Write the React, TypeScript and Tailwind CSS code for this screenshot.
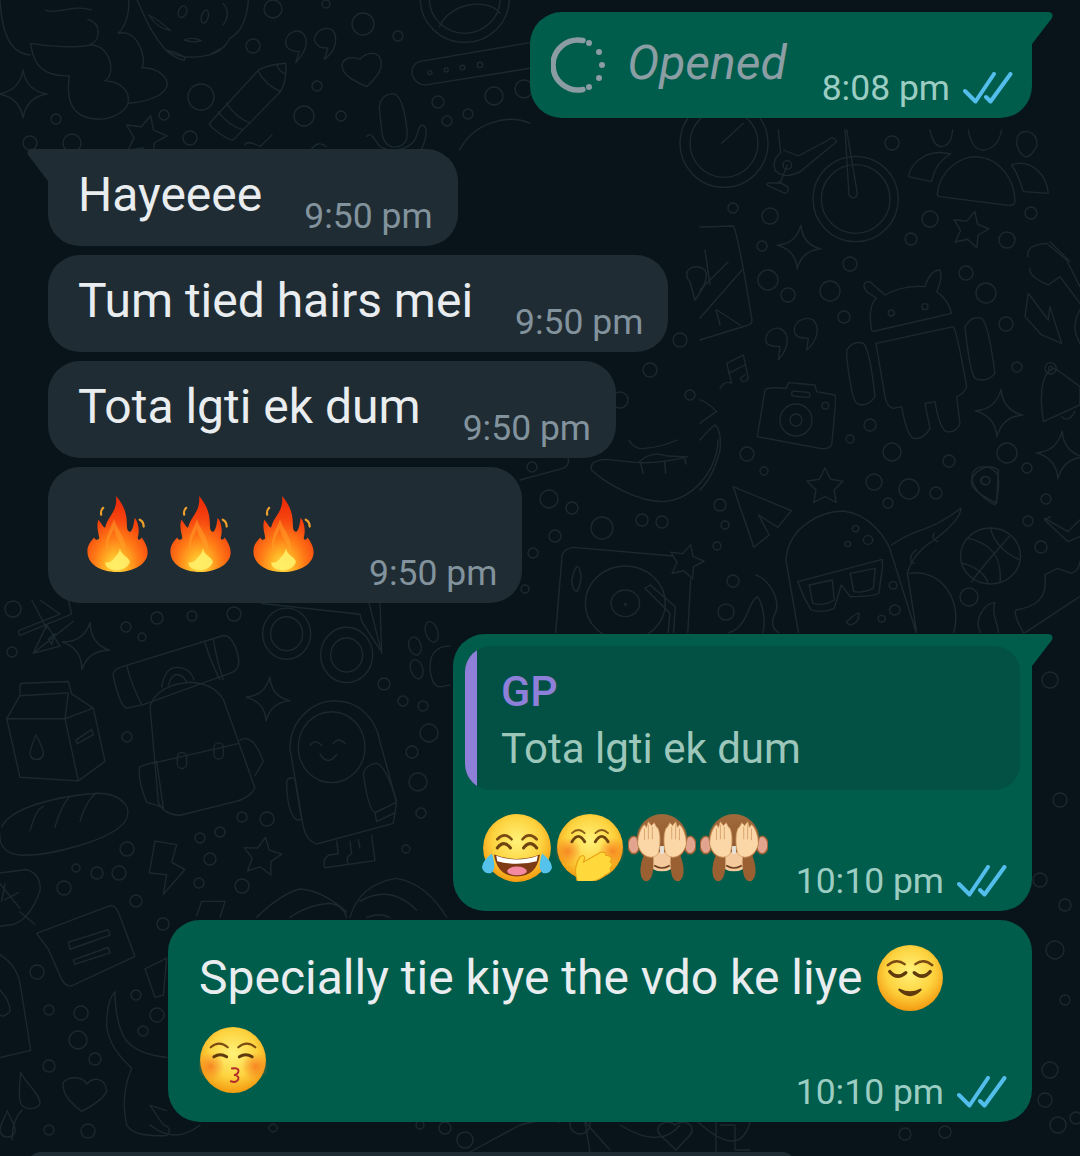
import type { ReactNode } from "react";

const starPoints = (cx: number, cy: number, r: number, rot: number) => {
  const pts: string[] = [];
  for (let i = 0; i < 10; i++) {
    const rad = i % 2 === 0 ? r : r * 0.5;
    const a = ((rot + i * 36 - 90) * Math.PI) / 180;
    pts.push(`${(cx + rad * Math.cos(a)).toFixed(1)},${(cy + rad * Math.sin(a)).toFixed(1)}`);
  }
  return pts.join(" ");
};

const sparkle = (cx: number, cy: number, r: number, rot: number) => {
  const a = (rot * Math.PI) / 180;
  const p = (x: number, y: number) =>
    `${(cx + x * Math.cos(a) - y * Math.sin(a)).toFixed(1)} ${(cy + x * Math.sin(a) + y * Math.cos(a)).toFixed(1)}`;
  const k = r * 0.14;
  return `M${p(0, -r)} Q${p(k, -k)} ${p(r, 0)} Q${p(k, k)} ${p(0, r)} Q${p(-k, k)} ${p(-r, 0)} Q${p(-k, -k)} ${p(0, -r)}Z`;
};

// page-space dots of the doodle wallpaper: x, y, r
const dots: number[][] = [
  [273, 9, 9], [326, 4, 4], [363, 24, 11], [398, 36, 5], [253, 46, 7], [317, 86, 5], [201, 97, 13], [304, 116, 10], [341, 116, 5], [438, 102, 6], [447, 121, 5], [468, 114, 5], [494, 96, 9], [524, 89, 9], [56, 119, 5], [164, 115, 5], [190, 138, 7], [30, 143, 7], [72, 143, 9],
  [733, 208, 5], [770, 216, 8], [762, 246, 5], [768, 280, 10], [788, 295, 7], [830, 291, 10], [850, 264, 7], [844, 317, 6], [870, 425, 6], [850, 439, 4], [892, 143, 7], [930, 219, 8], [911, 239, 6], [1007, 240, 8], [1031, 213, 6], [966, 273, 7], [986, 293, 10], [1006, 324, 7], [1017, 367, 5],
  [892, 452, 9], [874, 482, 8], [909, 489, 10], [936, 493, 6], [888, 503, 5], [1007, 453, 10], [949, 461, 6], [1027, 468, 5], [1046, 499, 5], [747, 454, 7], [764, 471, 4], [720, 505, 6], [725, 525, 4], [717, 546, 4], [1028, 521, 5], [1041, 547, 6], [969, 597, 9], [733, 581, 6], [726, 612, 8],
  [549, 499, 9], [572, 508, 6], [602, 528, 11], [642, 520, 6], [662, 522, 6], [555, 536, 6], [533, 553, 5], [532, 467, 5], [525, 589, 4],
  [620, 400, 8], [650, 370, 7], [690, 395, 5], [680, 340, 7], [470, 430, 6],
  [13, 609, 8], [12, 652, 5], [126, 627, 5], [157, 618, 6], [192, 616, 5], [234, 614, 7], [142, 637, 4], [384, 684, 6], [403, 701, 5], [423, 706, 5], [429, 733, 9], [412, 752, 6], [418, 782, 9], [421, 813, 5], [406, 849, 4], [127, 737, 5], [242, 817, 5], [267, 819, 7], [200, 838, 5], [220, 832, 5], [210, 859, 6], [199, 883, 5], [242, 886, 7], [127, 849, 7], [76, 868, 4], [97, 873, 6], [119, 873, 7], [64, 888, 7], [136, 901, 6], [163, 924, 6], [37, 972, 7], [136, 995, 5], [157, 1015, 7], [143, 1031, 5], [49, 1010, 5], [81, 1013, 7], [78, 1040, 9], [95, 1059, 6], [49, 1066, 6], [49, 1130, 5], [88, 1131, 7],
  [1050, 680, 8], [1060, 800, 7], [1055, 950, 9], [1040, 880, 7], [1065, 905, 6], [1065, 1000, 5], [1050, 1070, 8], [1058, 1125, 8], [1076, 1118, 6], [1045, 1100, 7], [273, 1128, 4], [420, 1125, 4], [465, 1140, 8], [445, 1128, 6], [580, 1124, 10], [905, 1134, 6], [945, 1132, 6],
];

const stars: number[][] = [
  [145, 137, 22, 15], [262, 857, 20, 10], [970, 230, 19, 15], [825, 487, 19, 0], [686, 562, 18, 15],
];

const sparkles: number[][] = [
  [23, 94, 24, 0], [86, 646, 24, 10], [268, 699, 22, 5], [799, 247, 22, 5], [999, 413, 24, 5], [1060, 455, 24, 5],
];

function Wallpaper() {
  return (
    <svg
      className="absolute inset-0"
      width="1080"
      height="1156"
      viewBox="0 0 1080 1156"
      fill="none"
      stroke="#1b292e"
      strokeWidth="1.4"
      strokeLinecap="round"
      strokeLinejoin="round"
    >
      {dots.map(([x, y, r], i) => (
        <circle key={i} cx={x} cy={y} r={r} />
      ))}
      {stars.map(([x, y, r, a], i) => (
        <polygon key={i} points={starPoints(x, y, r, a)} />
      ))}
      {sparkles.map(([x, y, r, a], i) => (
        <path key={i} d={sparkle(x, y, r, a)} />
      ))}

      {/* top strip */}
      <g transform="scale(0.338 0.333)" strokeWidth="4">
        <path d="M620 370 L765 210 Q790 195 845 190 Q850 240 830 275 L690 420 Q680 425 630 385 Q618 375 620 370Z M645 335 Q680 380 720 390 M670 310 Q700 355 740 370 M765 215 Q785 255 830 275 M820 195 Q825 215 845 222" />
        <path d="M1085 260 C1050 245 1010 225 1012 195 C1015 170 1050 170 1065 178 C1085 155 1125 150 1128 190 C1130 215 1105 240 1085 260Z" />
        <path d="M875 188 C900 160 915 130 900 105 C880 80 845 100 845 130 C848 150 870 155 885 155 Z M960 178 C985 160 1000 130 990 100 C975 70 930 90 930 120 C935 140 955 145 970 145 Z" />
        <path d="M1568 128 L1240 185 Q1215 195 1220 225 Q1230 255 1260 255 L1568 205" />
        <circle cx="1272" cy="218" r="6" /><circle cx="1320" cy="210" r="6" /><circle cx="1368" cy="203" r="7" /><circle cx="1420" cy="195" r="8" />
        <path d="M1122 320 Q1130 280 1165 282 Q1195 290 1205 400 Q1205 440 1165 442 Q1135 438 1130 400 Z M1085 410 Q1095 395 1110 420 Q1125 455 1170 450 Q1225 445 1235 400 Q1245 360 1260 385 Q1265 420 1240 460" />
        <circle cx="1375" cy="-5" r="132" /><circle cx="1375" cy="-5" r="105" />
        <path d="M1300 80 C1330 10 1440 -10 1480 40" />
        <path d="M0 0 C5 100 30 160 90 165 M90 130 C100 200 130 230 205 228 C195 300 210 355 290 358 C340 358 380 330 380 300 C380 265 350 245 310 242 C340 230 335 140 270 135 C230 145 150 140 90 130 M380 310 C440 305 495 285 495 250 C490 220 450 200 420 204 C435 180 410 85 350 100 M260 58 C300 70 300 120 265 135 M135 30 Q135 38 200 28 Q240 20 270 30 M380 0 C385 40 370 80 350 100" />
        <path d="M405 0 C430 50 440 90 490 150 C530 175 580 175 620 165 Q660 155 680 115 C710 100 730 60 735 0 M440 45 Q465 85 505 92 Q470 60 440 45 M490 150 Q510 170 545 182 Q555 165 490 150 M620 165 Q645 150 665 140 M660 10 Q685 40 660 75 M545 120 Q570 110 595 122 Q570 130 545 120" />
        <ellipse cx="540" cy="35" rx="12" ry="18" transform="rotate(20 540 35)" />
        <ellipse cx="606" cy="50" rx="10" ry="20" transform="rotate(15 606 50)" />
        <path d="M1360 450 C1400 370 1500 340 1568 370 M770 440 Q730 420 725 435 M770 440 L805 405 M920 450 Q940 420 965 440" />
      </g>

      {/* mid right doodles */}
      <g transform="translate(700 130) scale(0.3333)" strokeWidth="4">
        <circle cx="467" cy="207" r="128" /><circle cx="467" cy="207" r="103" />
        <circle cx="72" cy="40" r="132" /><circle cx="72" cy="40" r="102" />
        <path d="M65 40 L130 -20 M235 0 L242 68 Q215 90 225 120 Q250 150 300 125 L410 35 Q400 15 385 30 L295 78 L250 60 M262 105 L240 160 Q200 155 200 165 L255 190 Q270 185 262 170 L235 155 M435 0 L447 195 Q465 215 472 190 L440 0" />
        <circle cx="262" cy="105" r="13" />
        <path d="M712 190 C720 120 780 80 830 80 C900 85 945 150 945 215 Q940 228 925 226 L720 200 Q710 198 712 190Z M625 140 C635 90 690 55 752 72 C710 95 700 130 695 155Z M935 105 C990 85 1040 130 1045 190 L970 185 C960 150 950 125 935 105Z" />
        <path d="M690 0 Q700 50 725 50 Q755 45 758 0 M805 0 Q815 60 850 60 Q895 55 905 0 M950 40 Q950 0 985 5 Q1015 15 1010 50 Q990 85 975 80 Q955 70 950 40Z" />
        <path d="M515 600 C505 550 515 515 530 505 L500 485 Q480 455 510 455 L555 495 Q610 465 675 470 Q690 420 720 420 Q730 440 710 485 Q745 510 755 550 L525 603 Q515 605 515 600Z" />
        <circle cx="574" cy="549" r="9" /><circle cx="675" cy="530" r="9" />
        <path d="M528 640 L760 590 Q770 600 800 770 Q795 790 770 800 L780 880 Q770 910 740 905 Q720 900 705 815 L675 820 L690 895 Q670 930 640 925 Q620 915 605 830 L580 835 Q560 830 555 800 Z" />
        <path d="M440 660 Q460 630 490 640 Q510 660 525 800 Q500 835 470 820 Q455 810 440 680Z M795 590 Q815 555 845 565 Q865 580 885 730 Q860 760 825 745 Q810 730 795 590Z" />
        <path d="M235 690 C270 650 270 610 240 595 C210 590 190 620 200 640 C210 650 225 650 240 650 Z M320 660 C355 630 360 590 340 570 C310 555 275 580 285 610 C290 625 310 625 325 625 Z" />
        <path d="M60 775 Q75 750 95 760 L80 700 L130 675 L145 745 Q130 765 120 745 L135 735 M85 730 L135 705" />
        <path d="M172 920 L195 780 Q200 770 260 775 L265 758 L345 765 L350 785 L405 795 Q410 800 395 945 Q385 960 360 955Z" />
        <rect x="275" y="785" width="55" height="15" rx="7" transform="rotate(5 300 792)" />
        <circle cx="288" cy="870" r="48" /><circle cx="288" cy="870" r="18" /><circle cx="376" cy="827" r="10" />
        <path d="M985 490 L1045 570 L1050 530 L1085 640 L1025 615 L975 560 Z" />
        <path d="M1030 870 C1015 780 1030 720 1065 715 L1140 770 L1140 825 L1030 875Z M1085 860 Q1105 880 1125 845" />
        <circle cx="1052" cy="715" r="17" /><circle cx="1052" cy="715" r="6" />
        <path d="M985 380 Q975 345 1040 340 L1100 390 L1140 470 M990 415 Q985 440 1045 465 L1080 440 L1140 520 M1050 335 L1110 395 M1140 540 Q1110 590 1140 640" />
        <path d="M815 1040 C820 1000 880 1000 895 1040 Q900 1080 885 1125 Q820 1090 815 1040Z" /><circle cx="857" cy="1052" r="12" />
        <path d="M0 880 Q40 850 50 845 Q20 815 0 810 M0 930 Q30 895 45 885 Q65 900 60 960 Q40 1040 0 1080" />
      </g>

      {/* map fold */}
      <path d="M700 227 L733 226 Q737 228 752 320 Q752 325 745 326 L700 340 M700 318 L742 270 M700 290 L728 262 M717 310 L740 325 M705 250 L710 285 M716 310 L720 325" />
      <path d="M690 282 C680 270 695 262 705 270 Q710 280 695 300Z" />

      {/* lips and lower right */}
      <g transform="translate(520 440) scale(0.357 0.3333)" strokeWidth="4">
        <path d="M0 120 L120 85 Q140 75 135 55 M200 90 Q195 60 240 58 L330 68 Q370 30 410 48 L460 50 M200 90 C240 130 330 185 400 185 C480 180 550 100 555 0 M330 68 Q400 70 470 50 M345 100 L338 70 M408 100 L405 65 M465 72 L460 50 M305 0 Q320 30 350 25 Q400 20 440 0" />
        <path d="M597 140 L760 212 L722 262 L668 225 L698 285 L655 322 Z" />
        <path d="M780 578 L745 360 C750 270 830 215 905 213 C980 220 1030 300 1040 340 L1110 578 M1040 315 Q1090 280 1130 268 Q1180 250 1235 205 Q1235 240 1160 300 Q1100 340 1085 400 L1110 570" />
        <path d="M778 425 L1015 358 L1015 385 L1005 460 Q990 470 925 470 L900 435 L880 505 Q850 520 815 510 L795 470 Z M810 435 L875 420 L880 480 Q850 500 820 490Z M925 400 L995 385 L990 445 Q960 460 935 455Z" />
        <circle cx="940" cy="266" r="9" /><circle cx="975" cy="300" r="13" /><circle cx="918" cy="312" r="8" /><circle cx="1045" cy="436" r="11" /><circle cx="1050" cy="510" r="15" /><circle cx="1013" cy="536" r="10" />
        <path d="M915 545 Q945 515 950 520 Q950 550 925 555 Q915 550 915 545Z M1090 400 C1180 385 1240 480 1215 578 M1110 330 C1090 345 1090 370 1105 370 M1160 280 Q1150 295 1170 305" />
        <circle cx="1318" cy="348" r="84" />
        <path d="M1318 265 C1330 320 1370 345 1400 360 M1256 295 C1320 310 1350 350 1345 425 M1240 370 C1280 380 1310 410 1310 432 M1370 290 C1330 340 1290 385 1265 425" />
        <path d="M100 578 L118 345 Q125 325 150 322 L430 348 M470 578 L478 420" />
        <circle cx="295" cy="490" r="112" /><circle cx="295" cy="490" r="40" /><circle cx="295" cy="493" r="3" />
        <path d="M145 420 Q160 350 170 400 Q175 420 160 455 Q145 450 145 420Z M350 445 L365 435 L435 500 L430 578 M350 445 L420 520 L415 578" />
        <path d="M585 578 C640 560 640 480 665 470 C680 490 690 550 680 578 M660 405 C700 420 730 480 715 520 C700 550 710 570 725 578" />
        <path d="M1290 578 C1270 540 1300 490 1330 488 C1320 530 1340 550 1340 578 M1415 578 L1568 470 M1470 405 L1505 385 L1545 400 Q1568 390 1568 365 M1470 405 C1480 480 1440 500 1390 510 Q1380 520 1410 578" />
        <path d="M1264 125 C1270 95 1310 65 1340 90 L1335 190 C1300 170 1265 150 1264 125Z" /><circle cx="1303" cy="122" r="13" />
        <path d="M1470 235 L1535 275 L1568 240 M1485 230 L1470 240 L1535 305 L1568 290" />
      </g>

      {/* lower left doodles */}
      <g transform="translate(0 600) scale(0.3333 0.3546)" strokeWidth="4">
        <path d="M20 335 L60 270 L60 240 Q60 235 70 235 L205 230 L215 265 L280 305 L315 455 L235 510 L60 500 Z M20 335 L195 335 L235 510 M195 335 L280 305 M60 270 L205 262 L195 335" />
        <path d="M108 380 C95 410 88 425 90 435 C95 455 125 455 130 435 C132 420 118 400 108 380Z M228 395 L275 365 L280 380 L232 405 Z" />
        <path d="M340 215 Q335 200 360 190 L670 100 Q700 100 715 160 Q722 195 695 205 L430 295 L380 305 Q360 300 340 215 Z M380 185 Q395 240 425 295 M615 120 Q630 170 660 225 M640 110 Q650 170 670 225" />
        <path d="M450 300 Q470 240 570 232 Q640 235 670 280 L765 530 Q750 560 700 570 L540 607 Q490 605 475 570 L450 300Z M460 460 L715 405 M420 470 L470 455 L490 585 L440 570 Q410 500 420 470 M720 395 Q760 375 790 455 L765 495 M485 245 Q495 190 530 190 Q570 190 582 225 M505 240 Q515 210 530 210 Q550 210 560 232" />
        <rect x="532" y="430" width="28" height="45" rx="13" /><rect x="642" y="403" width="28" height="45" rx="13" />
        <path d="M5 640 C30 590 150 555 290 545 C370 545 400 590 375 625 C330 680 150 720 70 720 C30 720 -5 700 0 660 M90 650 C100 620 110 590 130 582 M165 640 C175 610 190 570 210 555 M240 625 C250 595 265 560 285 548" />
        <path d="M870 420 C870 330 950 280 1010 285 C1080 285 1130 340 1140 400 L1190 570 L1180 630 L950 688 Q920 680 910 640 L870 420Z" />
        <circle cx="995" cy="415" r="100" />
        <path d="M1090 490 Q1095 465 1130 460 Q1160 470 1190 570 L1125 600 Q1105 590 1090 490Z M1125 600 L1130 625 L1185 600 M860 510 Q870 495 885 505 L905 620 L890 620 Q860 600 860 510Z M930 410 Q945 390 965 410 M1000 405 Q1015 385 1035 405 M960 435 Q985 470 1010 435" />
        <path d="M1010 680 L1015 715 L985 720 Q965 735 975 755 L1125 735 L1115 665 M1050 680 L1055 715 Q1035 725 1045 745 M1075 675 L1080 700" />
        <path d="M465 680 L530 690 L515 740 L555 760 L490 830 L500 775 L448 770 Z" />
        <path d="M0 770 L80 760 Q125 775 120 820 Q90 900 40 915 L0 920 M60 880 L105 915 M0 800 L60 870 M15 800 L5 850 M55 825 L15 845" />
        <path d="M110 940 L330 862 Q345 860 355 880 L405 1005 L215 1088 Q195 1090 185 1070 L145 985 L110 940 Z M205 965 L325 930 L330 945 L210 985Z M220 1015 L325 980 L330 995 L225 1027Z" />
        <path d="M0 1000 Q50 1030 60 1080 L92 1270 L0 1290 M0 1100 Q30 1130 30 1160 Q10 1180 0 1170" />
        <path d="M345 1105 Q320 1130 320 1200 Q325 1260 395 1320 Q360 1400 380 1480 Q400 1515 500 1510 Q520 1490 490 1480 L450 1425 L500 1440 M345 1105 Q345 1180 370 1230 Q400 1280 500 1290" />
        <path d="M190 1360 C210 1340 250 1345 260 1365 C280 1345 315 1345 320 1385 C310 1410 270 1430 245 1442 C215 1420 185 1395 190 1360Z" />
        <path d="M62 1332 C75 1360 122 1395 120 1420 C110 1440 70 1440 60 1415 C55 1385 60 1360 62 1332Z M22 1440 C30 1465 48 1480 45 1500 C35 1520 5 1520 0 1495 C0 1480 15 1460 22 1440Z" />
        <path d="M435 1040 L500 1010 L490 1115 L465 1120 Z M605 850 L675 850 L660 895 M590 890 L605 850" />
        <path d="M770 895 Q840 830 900 815 Q970 820 1040 880 M870 895 Q920 860 990 855 Q1030 860 1040 895 M1050 895 Q1080 800 1190 785 Q1280 800 1340 895 M1080 850 Q1170 800 1250 875 M1100 895 Q1140 880 1170 895" />
        <path d="M785 10 L1080 40 L1085 60 L1140 140" />
        <circle cx="860" cy="95" r="72" /><circle cx="860" cy="95" r="48" /><circle cx="1040" cy="155" r="78" /><circle cx="1040" cy="155" r="48" />
        <path d="M1105 0 L1145 150 M1140 0 L1145 150" />
        <path d="M95 0 L140 80 M205 0 L215 40 L60 100 Q50 90 60 85 L180 40 L120 0 M100 150 L220 60 M100 150 L140 70 L180 130 Z M145 110 L165 95 L155 125Z" />
        <ellipse cx="1245" cy="130" rx="18" ry="26" transform="rotate(-20 1245 130)" />
        <ellipse cx="1295" cy="90" rx="18" ry="30" transform="rotate(-20 1295 90)" />
        <ellipse cx="1250" cy="195" rx="18" ry="28" transform="rotate(-20 1250 195)" />
        <path d="M1350 130 Q1290 130 1290 190 Q1295 245 1320 245 L1350 240" />
      </g>

      {/* bottom edge */}
      <path d="M470 1152 L520 1125 Q545 1118 560 1122 M590 1152 L585 1122 L610 1150 M620 1125 Q660 1150 680 1125 M698 1122 Q740 1160 750 1122 M716 1122 L716 1152 M720 1125 L735 1125 L735 1150 L750 1150" />
      <path d="M150 1125 Q175 1145 200 1125 M12 1140 Q12 1120 22 1110" />
      <path d="M660 1135 C652 1125 668 1118 675 1125 C682 1118 698 1125 690 1135 L676 1150Z" />
    </svg>
  );
}

function Ticks() {
  return (
    <svg width="50" height="32" viewBox="0 0 50 32" fill="none" stroke="#53bdeb" strokeWidth="4" strokeLinecap="round" strokeLinejoin="round">
      <path d="M2 19 L12.5 29.5 L31 2" />
      <path d="M23 25 L27.5 29.5 L47.5 2" />
    </svg>
  );
}

function Tail({ side, color }: { side: "left" | "right"; color: string }) {
  return side === "right" ? (
    <svg className="absolute left-full top-0 -ml-px" width="23" height="34" viewBox="0 0 23 34">
      <path d="M0 0 H18 Q23 1 21 6 L1 32 H0Z" fill={color} />
    </svg>
  ) : (
    <svg className="absolute right-full top-0 -mr-px" width="23" height="34" viewBox="0 0 23 34">
      <path d="M23 0 H5 Q0 1 2 6 L22 32 H23Z" fill={color} />
    </svg>
  );
}

function Incoming({ text, first, children }: { text?: string; first?: boolean; children?: ReactNode }) {
  return (
    <div className={`relative ml-[48px] self-start flex items-end bg-[#202c33] rounded-[32px] pl-[30px] pr-[25px] pb-[9px] ${first ? "rounded-tl-none" : ""}`}>
      {first && <Tail side="left" color="#202c33" />}
      {children ?? (
        <span className="mt-[18px] mb-[14px] text-[48px] leading-[56px] text-[#e9edef] whitespace-nowrap">{text}</span>
      )}
      <span className="ml-[42px] text-[35.5px] leading-[42px] text-[#82939d] whitespace-nowrap">9:50 pm</span>
    </div>
  );
}

function OutMeta({ time }: { time: string }) {
  return (
    <div className="flex items-center gap-[13px] text-[35.5px] leading-[42px] text-[#9ccdc3] whitespace-nowrap">
      <span>{time}</span>
      <Ticks />
    </div>
  );
}

function Spinner() {
  return (
    <svg width="56" height="56" viewBox="0 0 56 56" fill="#8b9ca3">
      <path d="M32 3.5 A25 25 0 1 0 32 52.5" fill="none" stroke="#8b9ca3" strokeWidth="5.5" strokeLinecap="round" />
      <circle cx="38" cy="6" r="3" /><circle cx="48" cy="15" r="3" /><circle cx="51" cy="28" r="3" /><circle cx="48" cy="41" r="3" /><circle cx="38" cy="50" r="3" />
    </svg>
  );
}

function Face({ id, size, children }: { id: string; size: number; children: ReactNode }) {
  return (
    <svg width={size} height={size} viewBox="0 0 64 64" className="shrink-0">
      <defs>
        <radialGradient id={id} cx="50%" cy="40%" r="58%">
          <stop offset="0%" stopColor="#fff27a" />
          <stop offset="62%" stopColor="#fdd33f" />
          <stop offset="100%" stopColor="#f59f14" />
        </radialGradient>
        <radialGradient id={`${id}-blush`}>
          <stop offset="0%" stopColor="#f5701c" stopOpacity="0.75" />
          <stop offset="100%" stopColor="#f5701c" stopOpacity="0" />
        </radialGradient>
      </defs>
      <circle cx="32" cy="32" r="31" fill={`url(#${id})`} />
      {children}
    </svg>
  );
}

function Fire() {
  return (
    <svg width="66" height="78" viewBox="0 0 66 79" className="shrink-0">
      <defs>
        <radialGradient id="fire" cx="48%" cy="92%" r="82%">
          <stop offset="0%" stopColor="#ffe24a" />
          <stop offset="20%" stopColor="#ffb726" />
          <stop offset="45%" stopColor="#ff7b16" />
          <stop offset="75%" stopColor="#f6450f" />
          <stop offset="100%" stopColor="#ee2f0a" />
        </radialGradient>
      </defs>
      <path fill="url(#fire)" d="M30 1 C36 8 41 16 41 30 C41 35 42 38 45 37 C48 33 48 27 49 23 C53 28 54 37 52 43 C52 46 54 46 56 43 C60 49 62 53 62 58 C62 70 48 78 31 78 C14 78 1 70 1 57 C1 51 4 47 8 43 C9 46 11 46 13 44 C12 36 10 33 12 25 C15 28 17 33 19 33 C21 22 32 17 30 1Z" />
      <path fill="#ffa32a" opacity="0.5" d="M28 24 C30 34 41 42 39 58 C35 48 29 43 28 34 C25 41 20 47 22 58 C16 47 24 36 28 24Z" />
      <path fill="#fff06a" opacity="0.9" d="M34 54 C35 62 44 63 44 68 C42 73 37 76 31 76 C24 76 19 73 19 68 C23 69 26 67 28 64 C31 61 33 59 34 54Z" />
      <path fill="none" stroke="#eea02c" strokeWidth="2.2" strokeLinecap="round" d="M17 13 Q14 16 15 20 M54 25 Q58 27 58 32" />
    </svg>
  );
}

function Joy() {
  return (
    <Face id="joy" size={70}>
      <path d="M14 24 Q21 17 27 24 M37 24 Q43 17 50 24" fill="none" stroke="#7a4a12" strokeWidth="2.4" strokeLinecap="round" />
      <path d="M14 32 Q20 24 26 32 M38 32 Q44 24 50 32" fill="none" stroke="#6d4310" strokeWidth="2.8" strokeLinecap="round" />
      <path d="M11 38 Q32 46 53 38 Q50 58 32 58 Q14 58 11 38Z" fill="#7d3a14" />
      <path d="M13 39 Q32 46 51 39 L50 44 Q32 49 14 44Z" fill="#fff" />
      <ellipse cx="32" cy="53" rx="9" ry="4" fill="#f48aa1" />
      <path d="M9 37 Q0 44 0 50 Q2 56 8 55 Q14 52 9 37Z M55 37 Q64 44 64 50 Q62 56 56 55 Q50 52 55 37Z" fill="#54c2ea" />
    </Face>
  );
}

function HandOverMouth() {
  return (
    <Face id="hand" size={68}>
      <circle cx="11" cy="36" r="13" fill="url(#hand-blush)" />
      <circle cx="53" cy="36" r="13" fill="url(#hand-blush)" />
      <path d="M15 27 Q21 17 27 27 M37 27 Q43 17 49 27" fill="none" stroke="#6d4310" strokeWidth="2.8" strokeLinecap="round" />
      <path d="M15 19 Q21 13 27 19 M37 19 Q43 13 49 19" fill="none" stroke="#8a5a1a" strokeWidth="1.6" strokeLinecap="round" />
      <path d="M20 64 Q16 52 22 42 Q26 38 27 42 L26 46 L42 37 Q47 36 47 40 L49 40 Q54 42 51 46 Q55 48 51 52 Q53 56 47 58 Q38 66 24 65Z" fill="#ffd83b" stroke="#e89f16" strokeWidth="1" />
    </Face>
  );
}

function Monkey({ id }: { id: string }) {
  return (
    <svg width="68" height="70" viewBox="0 0 70 72" className="shrink-0">
      <defs>
        <linearGradient id={id} x1="0" y1="0" x2="0" y2="1">
          <stop offset="0%" stopColor="#a06a3c" />
          <stop offset="100%" stopColor="#8a5429" />
        </linearGradient>
      </defs>
      <ellipse cx="6" cy="33" rx="6" ry="9" fill="#e3a48f" stroke="#9b6233" strokeWidth="1.5" />
      <ellipse cx="64" cy="33" rx="6" ry="9" fill="#e3a48f" stroke="#9b6233" strokeWidth="1.5" />
      <ellipse cx="35" cy="27" rx="26" ry="26" fill={`url(#${id})`} />
      <ellipse cx="35" cy="50" rx="15" ry="10" fill="#f4c99b" />
      <path d="M27 54 Q35 59 43 54" fill="none" stroke="#6b3d1c" strokeWidth="1.6" />
      <path d="M16 44 C12 54 11 66 17 70 C25 72 27 60 26 44Z M54 44 C58 54 59 66 53 70 C45 72 43 60 44 44Z" fill="#9a6031" />
      <path d="M10 32 C10 24 13 15 17 12 L19 15 L21 9 L24 13 L27 10 L29 14 L31 16 C34 24 33 36 31 42 C26 48 14 47 10 32Z" fill="#fbd6a6" stroke="#d79f66" strokeWidth="0.8" />
      <path d="M60 32 C60 24 57 15 53 12 L51 15 L49 9 L46 13 L43 10 L41 14 L39 16 C36 24 37 36 39 42 C44 48 56 47 60 32Z" fill="#fbd6a6" stroke="#d79f66" strokeWidth="0.8" />
      <path d="M17 16 L17 28 M21 12 L21 27 M25 14 L25 27 M53 16 L53 28 M49 12 L49 27 M45 14 L45 27" stroke="#d79f66" strokeWidth="0.9" />
      <rect x="33" y="34" width="4" height="8" fill="#e5e2da" />
    </svg>
  );
}

function Relieved() {
  return (
    <Face id="relieved" size={68}>
      <path d="M11 20 Q19 13 27 19 M37 19 Q45 13 53 20" fill="none" stroke="#7a4a12" strokeWidth="2.2" strokeLinecap="round" />
      <path d="M13 26 Q20 34 28 27 M36 27 Q44 34 51 26" fill="none" stroke="#5f3a0c" strokeWidth="3.2" strokeLinecap="round" />
      <path d="M22 43 Q32 53 42 43 Q32 48 22 43Z" fill="#5f3a0c" stroke="#5f3a0c" strokeWidth="2" strokeLinejoin="round" />
    </Face>
  );
}

function Kissing() {
  return (
    <Face id="kiss" size={68}>
      <circle cx="11" cy="38" r="13" fill="url(#kiss-blush)" />
      <circle cx="53" cy="38" r="13" fill="url(#kiss-blush)" />
      <path d="M11 20 Q19 13 27 20 M37 20 Q45 13 53 20" fill="none" stroke="#7a4a12" strokeWidth="2" strokeLinecap="round" />
      <path d="M14 29 Q20 25 26 29 M38 29 Q44 25 50 29" fill="none" stroke="#5f3a0c" strokeWidth="2.8" strokeLinecap="round" />
      <path d="M31 40 Q38 39 37 43 Q36 46 33 46 Q38 47 37 50 Q35 54 30 52" fill="none" stroke="#b32a28" strokeWidth="1.8" strokeLinecap="round" />
    </Face>
  );
}

export default function App() {
  return (
    <div className="relative w-[1080px] h-[1156px] overflow-hidden bg-[#09141a] font-['Roboto',sans-serif]">
      <Wallpaper />

      <div className="relative flex flex-col pt-[12px]">
        {/* Opened view-once message */}
        <div className="relative self-end mr-[48px] flex items-start bg-[#005c4b] rounded-[32px] rounded-tr-none pl-[21px] pr-[19px] h-[106px]">
          <Tail side="right" color="#005c4b" />
          <div className="mt-[25px]"><Spinner /></div>
          <span className="ml-[20px] mt-[23px] text-[48px] leading-[56px] italic text-[#8a9ea4]">Opened</span>
          <div className="ml-[35px] mt-[55px]"><OutMeta time="8:08 pm" /></div>
        </div>

        <div className="mt-[31px] flex flex-col gap-[9px]">
          <Incoming text="Hayeeee" first />
          <Incoming text="Tum tied hairs mei" />
          <Incoming text="Tota lgti ek dum" />
          <Incoming>
            <div className="mt-[28px] mb-[21px] ml-[8px] mr-[9px] flex gap-[17px]">
              <Fire /><Fire /><Fire />
            </div>
          </Incoming>
        </div>

        {/* Reply */}
        <div className="relative self-end mr-[48px] mt-[31px] w-[579px] bg-[#005c4b] rounded-[32px] rounded-tr-none pt-[12px] pl-[12px] pr-[12px] pb-[9px]">
          <Tail side="right" color="#005c4b" />
          <div className="relative h-[144px] rounded-[26px] bg-[#025144] overflow-hidden pl-[36px] pt-[20px]">
            <div className="absolute left-0 top-0 bottom-0 w-[12px] bg-[#8e7fd9]" />
            <div className="text-[43px] leading-[50px] font-medium text-[#8e7fd9]">GP</div>
            <div className="mt-[8px] text-[42px] leading-[50px] text-[#9dc7bb] whitespace-nowrap">Tota lgti ek dum</div>
          </div>
          <div className="mt-[23px] flex items-end justify-between pl-[17px] pr-[13px]">
            <div className="flex gap-[4px] mb-[19px]">
              <Joy /><HandOverMouth /><Monkey id="m1" /><Monkey id="m2" />
            </div>
            <OutMeta time="10:10 pm" />
          </div>
        </div>

        {/* Last message */}
        <div className="self-end mr-[48px] mt-[9px] w-[864px] bg-[#005c4b] rounded-[32px] pl-[31px] pr-[25px] pt-[24px] pb-[9px]">
          <div className="flex items-center gap-[13px] text-[48px] leading-[68px] text-[#e9edef] whitespace-nowrap">
            <span>Specially tie kiye the vdo ke liye</span>
            <Relieved />
          </div>
          <div className="mt-[14px] flex items-end justify-between">
            <div className="mb-[19px]"><Kissing /></div>
            <OutMeta time="10:10 pm" />
          </div>
        </div>

        <div className="ml-[27px] mt-[30px] w-[769px] h-[40px] rounded-t-[14px] bg-[#202c33]" />
      </div>
    </div>
  );
}
